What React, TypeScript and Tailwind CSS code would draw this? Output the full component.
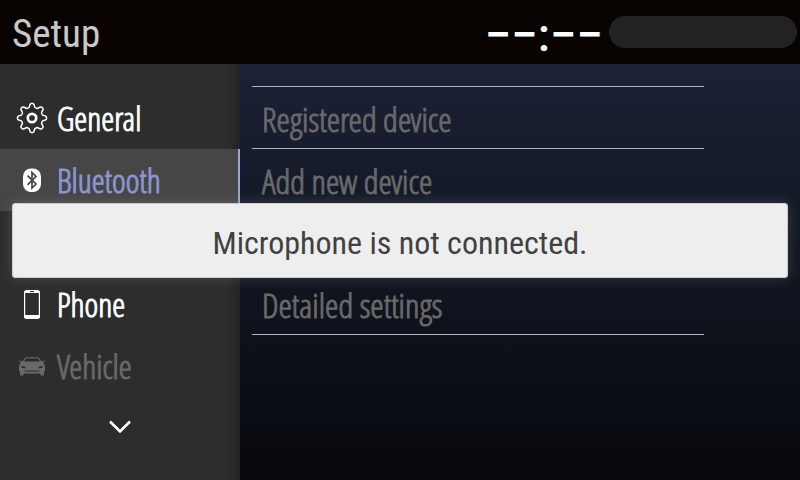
import type { ReactNode } from "react";

const gearOutline = (() => {
  const steps = 160;
  const points: string[] = [];
  for (let i = 0; i < steps; i++) {
    const a = (i / steps) * Math.PI * 2;
    const r = 12.7 + 2 * Math.tanh(1.8 * Math.cos(8 * a) - 0.2);
    points.push(`${(16 + r * Math.sin(a)).toFixed(2)} ${(16 - r * Math.cos(a)).toFixed(2)}`);
  }
  return `M${points.join("L")}Z`;
})();

function GearIcon() {
  return (
    <svg viewBox="0 0 32 32" className="h-8 w-8" fill="none" stroke="currentColor" aria-hidden="true">
      <path d={gearOutline} strokeWidth="1.5" strokeLinejoin="round" />
      <circle cx="16" cy="16" r="4.2" strokeWidth="2.7" />
    </svg>
  );
}

function BluetoothIcon() {
  return (
    <svg viewBox="0 0 32 32" className="h-8 w-8" fill="none" aria-hidden="true">
      <rect x="7" y="4.5" width="18" height="23.5" rx="8" fill="white" />
      <path d="M11.5 11.7 20 20 16 24V8.5L20 12.5 11.5 20.8" stroke="#464646" strokeWidth="1.7" />
    </svg>
  );
}

function PhoneIcon() {
  return (
    <svg viewBox="0 0 32 32" className="h-8 w-8" aria-hidden="true">
      <path
        fill="currentColor"
        fillRule="evenodd"
        d="M10.500 2h11A2.500 2.500 0 0 1 24 4.500v24a2.500 2.500 0 0 1-2.500 2.500h-11A2.500 2.500 0 0 1 8 28.500v-24A2.500 2.500 0 0 1 10.500 2ZM9.200 5v22h13.600V5ZM14 3v1h4V3Z"
      />
    </svg>
  );
}

function CarIcon() {
  return (
    <svg viewBox="0 0 32 32" className="h-8 w-8" aria-hidden="true">
      <path
        fill="currentColor"
        fillRule="evenodd"
        transform="translate(0 1)"
        d="M9 6.500Q16 5.500 23 6.500L25.500 10.500 28.500 9.500V11L27 11.500Q29 13 29 16V20L28 21V24.500H24.500V22.500H7.500V24.500H4V21L3 20V16Q3 13 5 11.500L3.500 11V9.500L6.500 10.500ZM9.800 7.600 8 10.500H24L22.200 7.600Q16 6.800 9.800 7.600ZM5.500 15V16.800L10 17.500 9 15.800ZM26.500 15V16.800L22 17.500 23 15.800ZM8.500 19.500V20.500H23.500V19.500Z"
      />
    </svg>
  );
}

type Section = { name: string; icon: ReactNode; tone: string };

const upper: Section[] = [
  { name: "General", icon: <GearIcon />, tone: "text-white" },
  { name: "Bluetooth", icon: <BluetoothIcon />, tone: "bg-[#464646] text-[#8b97d2] border-r-2 border-[#98a3da]" },
];
const lower: Section[] = [
  { name: "Phone", icon: <PhoneIcon />, tone: "text-white" },
  { name: "Vehicle", icon: <CarIcon />, tone: "text-[#696969]" },
];

const label = "font-['Open_Sans_Condensed_Light','Open_Sans_Condensed',sans-serif] leading-10 [-webkit-text-stroke:1px_currentColor]";

function SectionButton({ name, icon, tone }: Section) {
  return (
    <li>
      <button type="button" className={`flex h-[62px] w-full items-center gap-[9px] pl-4 text-left ${tone}`}>
        {icon}
        <span className={`pt-[2px] text-[33px] ${label}`}>{name}</span>
      </button>
    </li>
  );
}

function SettingRow({ children }: { children?: ReactNode }) {
  return (
    <li className="h-[62px] border-b border-[#b4b5b8]">
      {children && (
        <button type="button" className={`flex h-full w-full items-center pl-[10px] pt-[2px] text-left text-[34px] text-[#696969] ${label}`}>
          {children}
        </button>
      )}
    </li>
  );
}

export default function App() {
  return (
    <div className="relative flex min-h-screen flex-col bg-[#090300] font-['Roboto_Condensed',sans-serif]">
      <header className="flex h-16 items-center pl-3 pr-[3px]">
        <h1 className="flex-1 pt-[3px] text-[39px] leading-[48px] text-[#c8c8c8]">Setup</h1>
        <time className="pt-[6px] font-['Roboto',sans-serif] text-[47px] font-medium leading-[48px] text-white">−−:−−</time>
        <div className="ml-[6px] h-8 w-[188px] rounded-full bg-[#222222]" />
      </header>

      <div className="flex flex-1">
        <nav className="w-60 bg-[#2d2d2d] bg-linear-to-r from-transparent from-95% to-[#222222] pt-[23px]">
          <ul>
            {upper.map((s) => (
              <SectionButton key={s.name} {...s} />
            ))}
            <li className="h-[62px]" />
            {lower.map((s) => (
              <SectionButton key={s.name} {...s} />
            ))}
          </ul>
          <button type="button" aria-label="More sections" className="flex h-[60px] w-full items-center justify-center text-white">
            <svg viewBox="0 0 22 14" className="h-[14px] w-[22px]" fill="none" aria-hidden="true">
              <path d="M1 1.500 11 11.500 21 1.500" stroke="currentColor" strokeWidth="2.6" />
            </svg>
          </button>
        </nav>

        <main className="flex-1 bg-linear-to-b from-[#1b2236] via-[#10141f] via-55% to-[#07090d] pl-3 pr-24 pt-[22px]">
          <ul className="border-t border-[#b4b5b8]">
            <SettingRow>Registered device</SettingRow>
            <SettingRow>Add new device</SettingRow>
            <SettingRow />
            <SettingRow>Detailed settings</SettingRow>
          </ul>
        </main>
      </div>

      <div
        role="alert"
        className="absolute inset-x-3 top-[203px] rounded-[3px] border border-[#cccccc] bg-[#eeeeee] pb-[15px] pt-5 text-center text-[32px] leading-[38px] text-[#414141] shadow-[0_0_14px_rgba(150,150,150,0.3)]"
      >
        Microphone is not connected.
      </div>
    </div>
  );
}
